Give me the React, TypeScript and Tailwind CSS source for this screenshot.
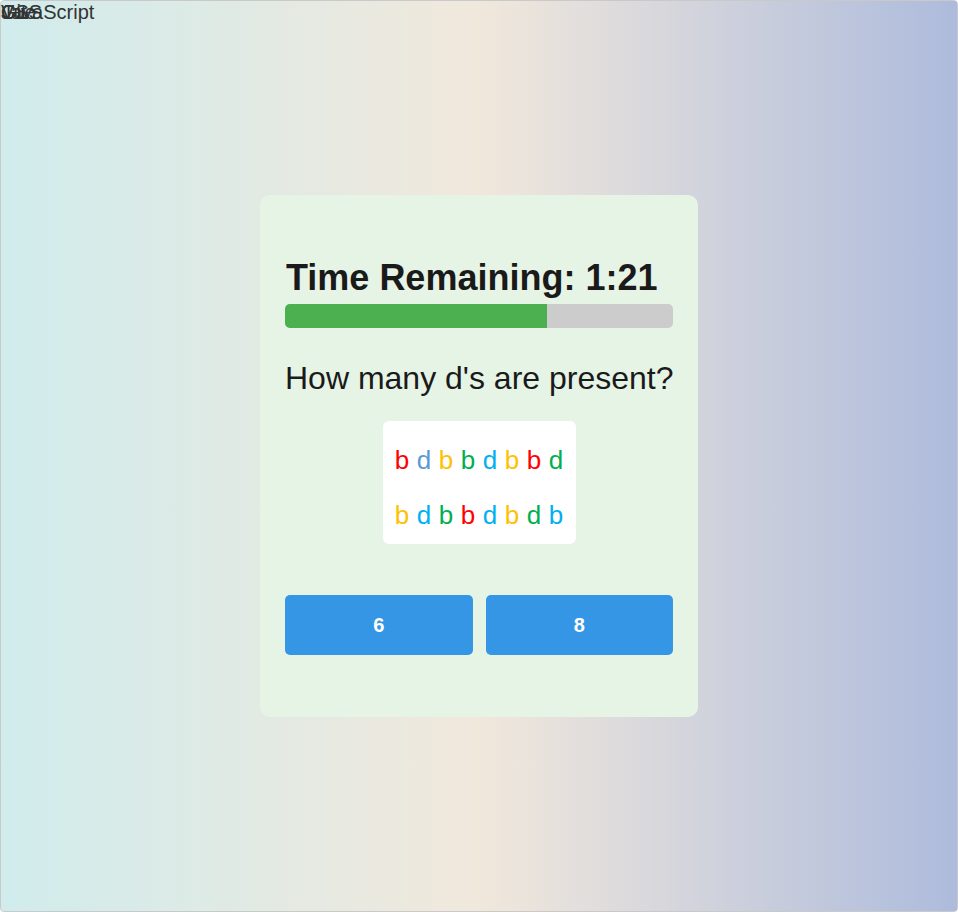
const ROWS: { ch: string; color: string }[][] = [
  [
    { ch: 'b', color: 'text-[#ff0000]' },
    { ch: 'd', color: 'text-[#5b9bd5]' },
    { ch: 'b', color: 'text-[#ffc000]' },
    { ch: 'b', color: 'text-[#00b050]' },
    { ch: 'd', color: 'text-[#00b0f0]' },
    { ch: 'b', color: 'text-[#ffc000]' },
    { ch: 'b', color: 'text-[#ff0000]' },
    { ch: 'd', color: 'text-[#00b050]' },
  ],
  [
    { ch: 'b', color: 'text-[#ffc000]' },
    { ch: 'd', color: 'text-[#00b0f0]' },
    { ch: 'b', color: 'text-[#00b050]' },
    { ch: 'b', color: 'text-[#ff0000]' },
    { ch: 'd', color: 'text-[#00b0f0]' },
    { ch: 'b', color: 'text-[#ffc000]' },
    { ch: 'd', color: 'text-[#00b050]' },
    { ch: 'b', color: 'text-[#00b0f0]' },
  ],
]

const TAGS = ['CSS', 'Vue', 'Git', 'JavaScript']

export default function App() {
  const progress = 67.5

  return (
    <div className="relative flex h-[912px] w-full items-center justify-center overflow-hidden rounded border border-[#c9c9c9] bg-[linear-gradient(to_right,#d0ecec,#f1e8dc_50%,#adbbdc)] font-['Liberation_Sans',Arial,sans-serif]">
      {/* overlapping tags in the corner */}
      {TAGS.map((t) => (
        <span key={t} className="absolute left-0 top-0 text-[20px] leading-[23px] text-[#333]">
          {t}
        </span>
      ))}

      <div className="w-[438px] rounded-[10px] bg-[#e6f4e6] p-[25px]">
        <h2 className="mt-[37px] whitespace-nowrap pl-px text-[36px] font-bold leading-[41px] text-[#1a1a1a]">
          Time Remaining: 1:21
        </h2>
        <div className="mt-[6px] h-[24px] w-full overflow-hidden rounded-[5px] bg-[#cccccc]">
          <div className="h-full bg-[#4caf50]" style={{ width: `${progress}%` }} />
        </div>

        <p className="mt-[32px] whitespace-nowrap text-[32px] leading-[37px] text-[#1a1a1a]">
          How many d's are present?
        </p>

        <div className="mx-auto mt-[24px] flex w-[193px] flex-col rounded-[6px] bg-white pt-[12px] pb-px">
          {ROWS.map((row, i) => (
            <div key={i} className="flex justify-center text-[26px] leading-[55px]">
              {row.map((l, j) => (
                <span key={j} className={`w-[22px] text-center ${l.color}`}>
                  {l.ch}
                </span>
              ))}
            </div>
          ))}
        </div>

        <div className="mb-[37px] mt-[51px] grid grid-cols-2 gap-[13px]">
          <button className="h-[60px] rounded-[5px] bg-[#3496e5] text-[20px] font-bold text-white">
            6
          </button>
          <button className="h-[60px] rounded-[5px] bg-[#3496e5] text-[20px] font-bold text-white">
            8
          </button>
        </div>
      </div>
    </div>
  )
}
